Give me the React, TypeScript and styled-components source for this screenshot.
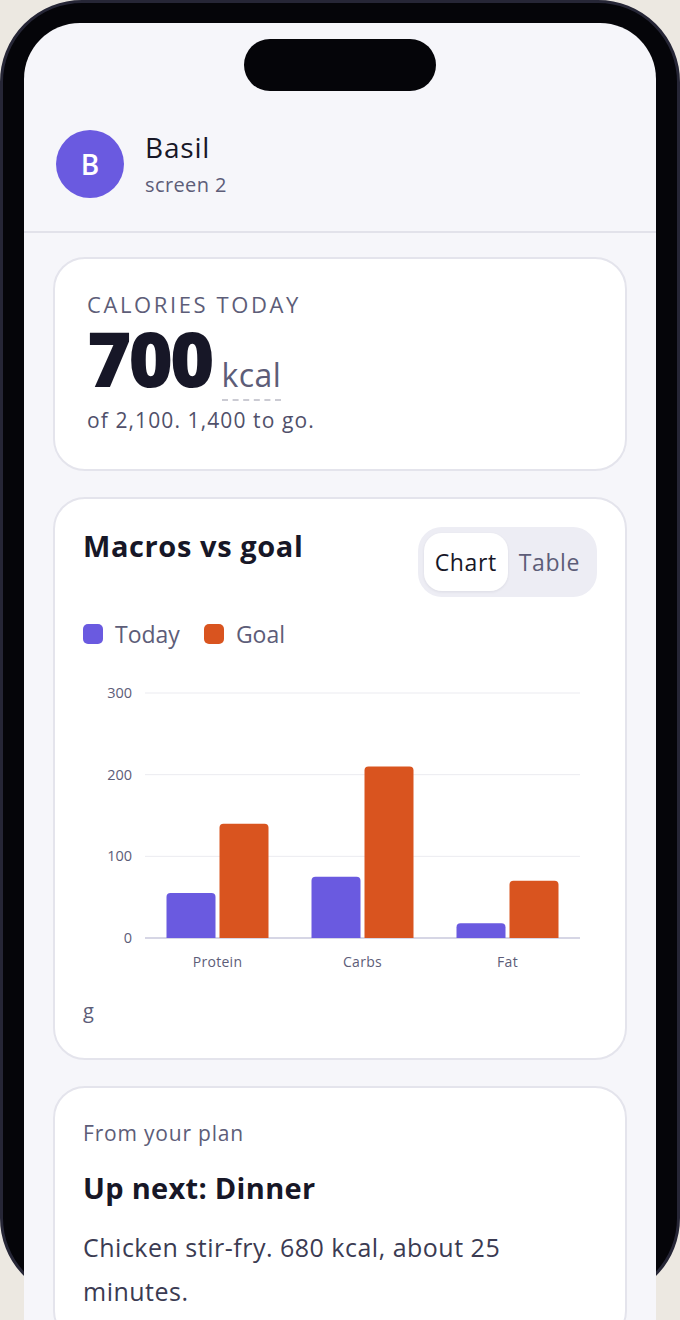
import React from 'react';
import styled, { createGlobalStyle } from 'styled-components';

const FONT = "'Open Sans', 'Noto Sans', 'DejaVu Sans', sans-serif";

const C = {
  ink: '#171727',
  muted: '#5d5d78',
  line: '#e4e4ec',
  screen: '#f6f6fa',
  today: '#6a5ae0',
  goal: '#d9541f'
};

const GlobalStyle = createGlobalStyle`
  html, body {
    margin: 0;
    padding: 0;
    background: #ece8e1;
  }
  body {
    font-family: ${FONT};
    color: ${C.ink};
  }
`;

interface Macro {
  name: string;
  today: number;
  goal: number;
}

const MACROS: Macro[] = [
  { name: 'Protein', today: 55, goal: 140 },
  { name: 'Carbs', today: 75, goal: 210 },
  { name: 'Fat', today: 18, goal: 70 }
];

// the black device body sits behind the screen; the screen runs on past it
const Phone = styled.div`
  position: relative;
  width: 680px;
  padding: 23px 24px 0;
  box-sizing: border-box;

  &::before {
    content: '';
    position: absolute;
    top: 0;
    left: 0;
    right: 0;
    height: 1300px;
    box-sizing: border-box;
    border: 3px solid #262636;
    border-radius: 82px;
    background: #050509;
  }
`;

const Screen = styled.div`
  position: relative;
  background: ${C.screen};
  border-radius: 56px 56px 0 0;
  min-height: 1320px;
  padding-top: 16px;
`;

const Island = styled.div`
  width: 192px;
  height: 52px;
  margin: 0 auto;
  border-radius: 26px;
  background: #050509;
`;

const Header = styled.header`
  display: flex;
  align-items: center;
  gap: 21px;
  padding: 38px 32px 32px;
  border-bottom: 2px solid #e2e2ea;
`;

const Avatar = styled.div`
  width: 68px;
  height: 68px;
  border-radius: 50%;
  background: #6a5ae0;
  color: #fff;
  display: flex;
  align-items: center;
  justify-content: center;
  font-size: 28px;
  font-weight: 600;
`;

const Name = styled.div`
  font-size: 28px;
  line-height: 36px;
  font-weight: 500;
  letter-spacing: 0.8px;
  color: ${C.ink};
`;

const Sub = styled.div`
  margin-top: 6px;
  font-size: 20px;
  line-height: 28px;
  letter-spacing: 0.4px;
  color: ${C.muted};
`;

const Body = styled.main`
  display: flex;
  flex-direction: column;
  gap: 26px;
  padding: 24px 29px;
`;

const Card = styled.section<{ $pad?: string }>`
  background: #fff;
  border: 2px solid ${C.line};
  border-radius: 32px;
  padding: ${(p) => p.$pad || '28px'};
`;

const Eyebrow = styled.div`
  font-size: 22px;
  line-height: 28px;
  letter-spacing: 2.6px;
  text-transform: uppercase;
  color: ${C.muted};
`;

const BigRow = styled.div`
  display: flex;
  align-items: baseline;
  gap: 10px;
  margin-top: -1px;
`;

const BigNumber = styled.span`
  font-size: 76px;
  line-height: 82px;
  font-weight: 800;
  letter-spacing: -3px;
  color: ${C.ink};
`;

const Unit = styled.span`
  font-size: 32px;
  line-height: 36px;
  letter-spacing: 0.4px;
  color: ${C.muted};
  padding-bottom: 6px;
  border-bottom: 2px dashed #cbcbd3;
`;

const Note = styled.div`
  margin-top: 5px;
  font-size: 21px;
  line-height: 28px;
  letter-spacing: 1.1px;
  color: #50506a;
`;

const CardHead = styled.div`
  display: flex;
  justify-content: space-between;
  align-items: flex-start;
`;

const Title = styled.h2`
  margin: 1px 0 0;
  font-size: 29px;
  line-height: 36px;
  font-weight: 700;
  letter-spacing: 0.6px;
  color: ${C.ink};
`;

const Toggle = styled.div`
  display: flex;
  padding: 6px;
  border-radius: 24px;
  background: #ededf4;
`;

const ToggleBtn = styled.button<{ $active?: boolean }>`
  border: 0;
  height: 58px;
  padding: 0 11px;
  border-radius: 18px;
  font-family: ${FONT};
  font-size: 23px;
  letter-spacing: 0.6px;
  color: ${(p) => (p.$active ? C.ink : C.muted)};
  background: ${(p) => (p.$active ? '#fff' : 'transparent')};
  box-shadow: ${(p) => (p.$active ? '0 1px 3px rgba(20,20,50,0.08)' : 'none')};
`;

const Legend = styled.div`
  display: flex;
  gap: 24px;
  margin-top: 23px;
`;

const LegendItem = styled.div`
  display: flex;
  align-items: center;
  gap: 12px;
  font-size: 23px;
  line-height: 28px;
  color: ${C.muted};
`;

const Swatch = styled.span<{ $color: string }>`
  width: 20px;
  height: 20px;
  border-radius: 5px;
  background: ${(p) => p.$color};
`;

const ChartSvg = styled.svg`
  display: block;
  margin-top: 31px;
`;

const UnitNote = styled.div`
  margin-top: 18px;
  font-size: 20px;
  line-height: 28px;
  color: ${C.muted};
`;

const Kicker = styled.div`
  font-size: 21px;
  line-height: 28px;
  letter-spacing: 0.8px;
  color: ${C.muted};
`;

const SubTitle = styled.h3`
  margin: 23px 0 0;
  font-size: 29px;
  line-height: 36px;
  font-weight: 700;
  letter-spacing: 0.3px;
  color: ${C.ink};
`;

const Para = styled.p`
  margin: 19px 0 0;
  font-size: 25px;
  line-height: 44px;
  letter-spacing: 0.5px;
  color: #3b3b52;
`;

function MacroChart () {
  const w = 515;
  const h = 300;
  const left = 62;
  const right = 497;
  const base = 259;
  const top = 14;
  const scale = (base - top) / 300;
  const band = (right - left) / MACROS.length;
  const barW = 49;

  return (
    <ChartSvg width={w} height={h} viewBox={`0 0 ${w} ${h}`}>
      {[0, 100, 200, 300].map((v) => {
        const y = base - v * scale;

        return (
          <g key={v}>
            <line x1={left} x2={right} y1={y} y2={y} stroke={v === 0 ? '#c9c9dc' : '#ebebf0'} strokeWidth={v === 0 ? 1.5 : 1} />
            <text x={49} y={y + 5} textAnchor='end' fontSize={14.5} fill={C.muted} fontFamily={FONT}>{v}</text>
          </g>
        );
      })}
      {MACROS.map((m, i) => {
        const cx = left + band * i + band / 2;
        const th = m.today * scale;
        const gh = m.goal * scale;

        return (
          <g key={m.name}>
            <path d={bar(cx - barW - 2, base, barW, th)} fill={C.today} />
            <path d={bar(cx + 2, base, barW, gh)} fill={C.goal} />
            <text x={cx} y={288} textAnchor='middle' fontSize={14} letterSpacing={0.3} fill={C.muted} fontFamily={FONT}>{m.name}</text>
          </g>
        );
      })}
    </ChartSvg>
  );
}

// bar with rounded top corners only
function bar (x: number, base: number, w: number, h: number): string {
  const r = Math.min(4, h / 2);
  const y = base - h;

  return `M${x},${base} V${y + r} Q${x},${y} ${x + r},${y} H${x + w - r} Q${x + w},${y} ${x + w},${y + r} V${base} Z`;
}

export default function App () {
  return (
    <>
      <GlobalStyle />
      <Phone>
        <Screen>
          <Island />
          <Header>
            <Avatar>B</Avatar>
            <div>
              <Name>Basil</Name>
              <Sub>screen 2</Sub>
            </div>
          </Header>
          <Body>
            <Card $pad='31px 32px 35px'>
              <Eyebrow>Calories today</Eyebrow>
              <BigRow>
                <BigNumber>700</BigNumber>
                <Unit>kcal</Unit>
              </BigRow>
              <Note>of 2,100. 1,400 to go.</Note>
            </Card>
            <Card $pad='28px 28px 33px'>
              <CardHead>
                <Title>Macros vs goal</Title>
                <Toggle>
                  <ToggleBtn $active>Chart</ToggleBtn>
                  <ToggleBtn>Table</ToggleBtn>
                </Toggle>
              </CardHead>
              <Legend>
                <LegendItem><Swatch $color={C.today} />Today</LegendItem>
                <LegendItem><Swatch $color={C.goal} />Goal</LegendItem>
              </Legend>
              <MacroChart />
              <UnitNote>g</UnitNote>
            </Card>
            <Card $pad='31px 28px 28px'>
              <Kicker>From your plan</Kicker>
              <SubTitle>Up next: Dinner</SubTitle>
              <Para>Chicken stir-fry. 680 kcal, about 25 minutes.</Para>
            </Card>
          </Body>
        </Screen>
      </Phone>
    </>
  );
}
